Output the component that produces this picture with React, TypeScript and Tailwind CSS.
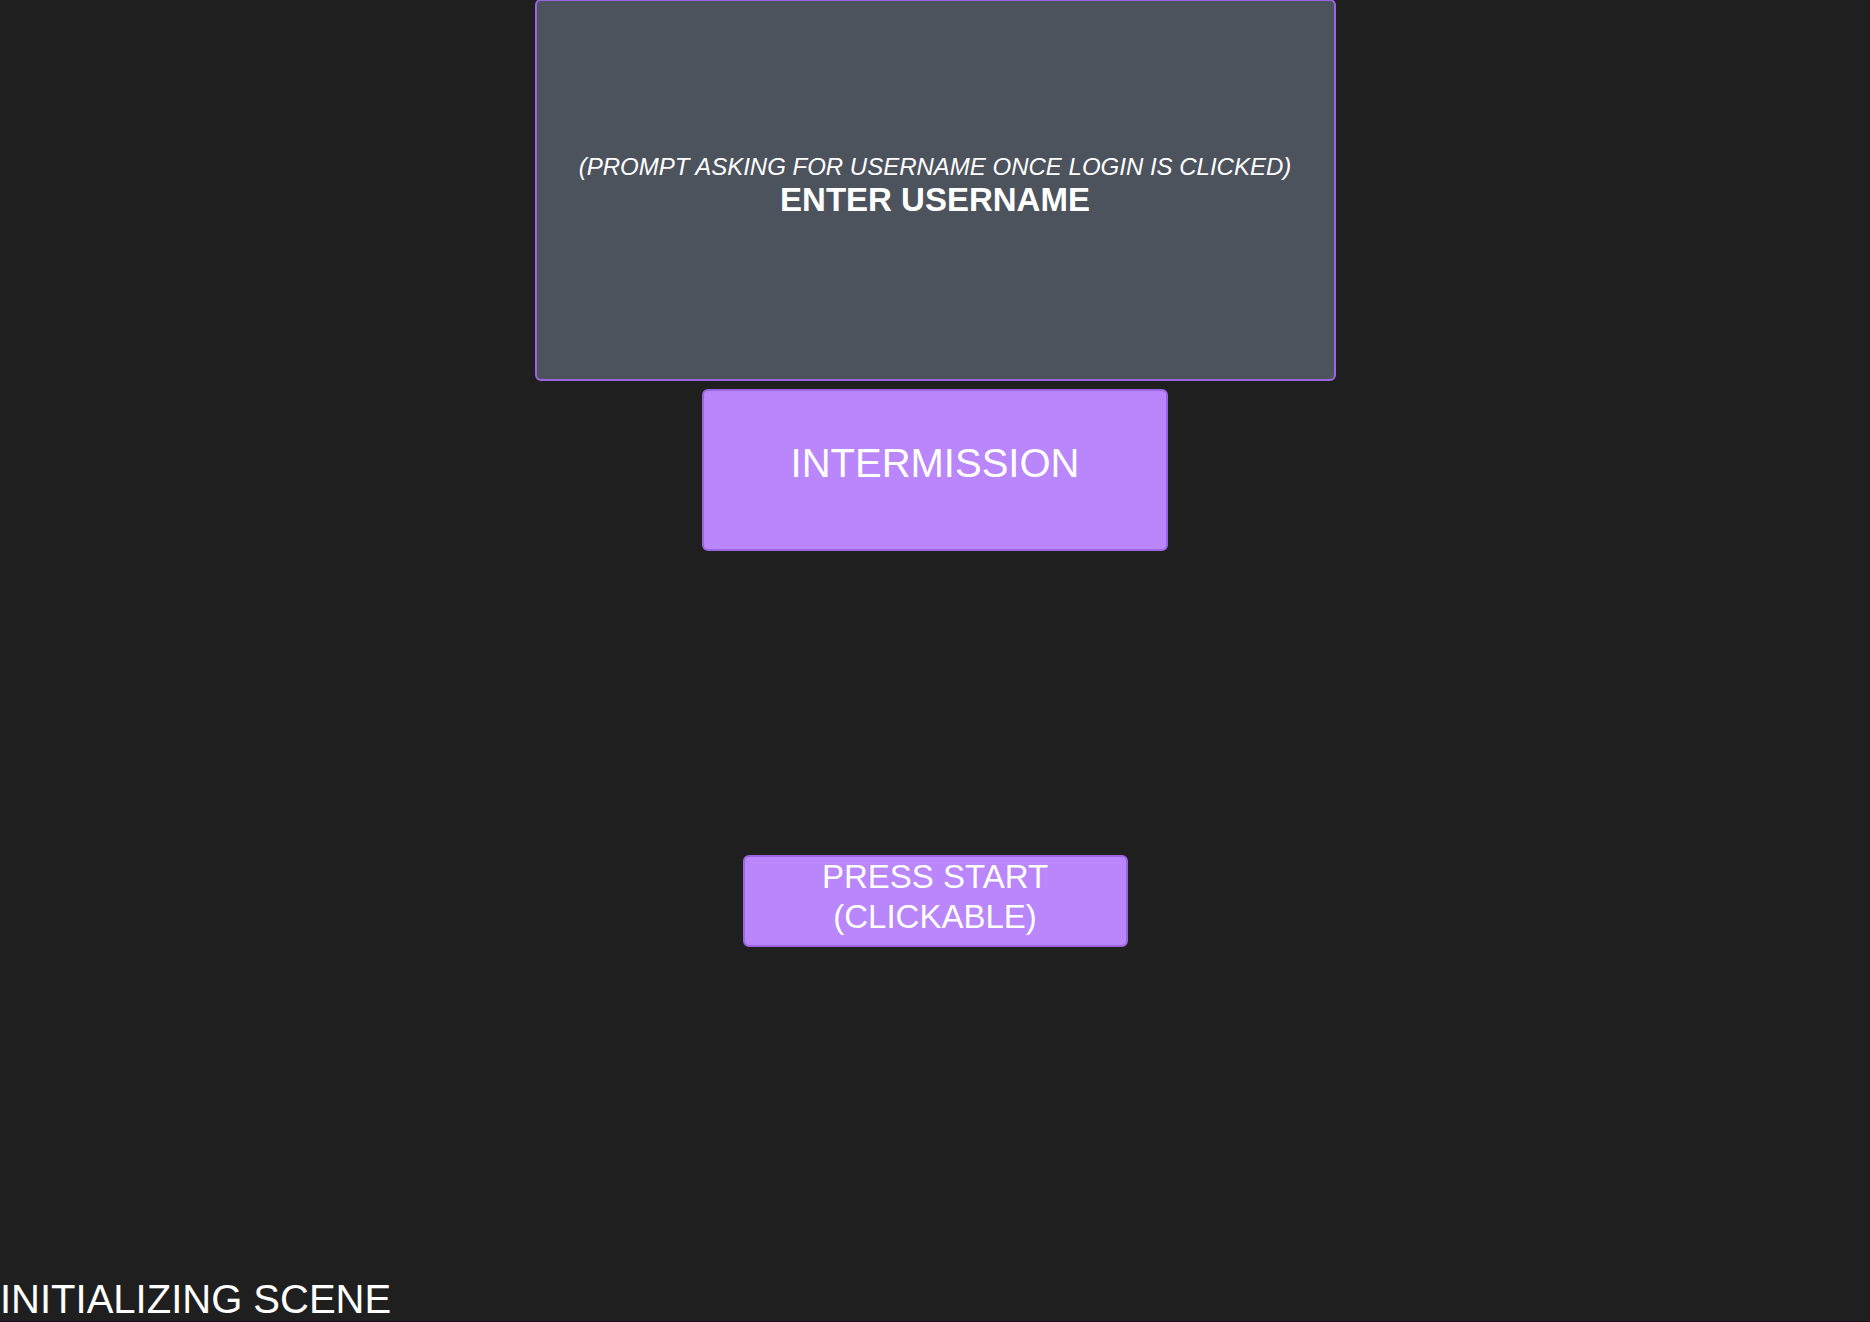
export default function App() {
  return (
    <main className="flex min-h-screen flex-col items-center border-b border-[#1c111b] bg-[#1f1f1f] font-['Liberation_Sans',Arial,sans-serif] text-white">
      <section className="-mt-px flex h-[382px] w-full max-w-[801px] flex-col items-center justify-center rounded-md border-2 border-[#9d64e2] bg-[#4d535d] pb-2 text-center">
        <p className="text-[24px] leading-7 italic">(PROMPT ASKING FOR USERNAME ONCE LOGIN IS CLICKED)</p>
        <h1 className="text-[33px] leading-[38px] font-bold">ENTER USERNAME</h1>
      </section>
      <section className="mt-2 flex h-[162px] w-full max-w-[466px] items-center justify-center rounded-md border-2 border-[#9d64e2] bg-[#ba86fc] pb-3.5">
        <h2 className="text-[40px] leading-12">INTERMISSION</h2>
      </section>
      <button
        type="button"
        className="mt-76 flex w-full max-w-[385px] cursor-pointer flex-col items-center rounded-md border-2 border-[#9d64e2] bg-[#ba86fc] pb-2 text-[33px] leading-10"
      >
        <span>PRESS START</span>
        <span>(CLICKABLE)</span>
      </button>
      <p className="mt-auto self-start text-[40px] leading-11">INITIALIZING SCENE</p>
    </main>
  );
}
